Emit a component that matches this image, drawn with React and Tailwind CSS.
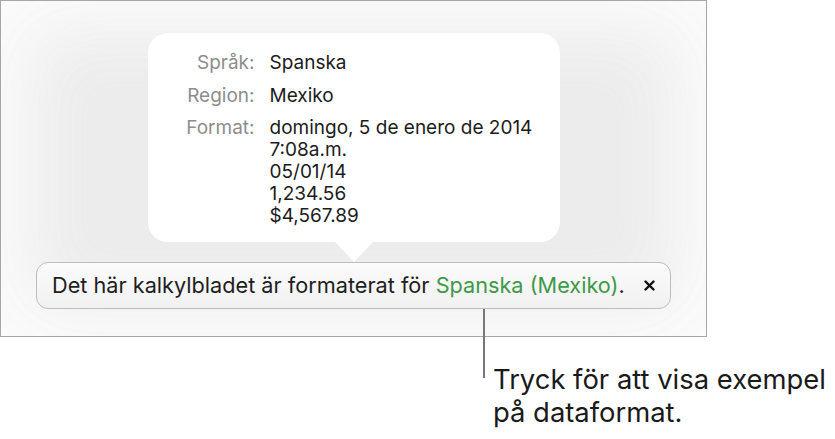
export default function App() {
  const font = { fontFamily: 'Inter, "Liberation Sans", sans-serif' };
  return (
    <div className="relative w-[835px] h-[439px] bg-white" style={font}>
      <div className="w-[707px] h-[337px] border border-[#a6a6a6] bg-[#ececec] shadow-[inset_0_0_70px_30px_rgba(252,252,252,0.95)] flex flex-col items-center pt-[32px]">
        <div className="relative w-[412px] bg-white rounded-[20px] pt-[19px] pb-[15px] pl-[15px]">
          <div className="grid grid-cols-[92px_1fr] gap-x-[15px] gap-y-[10.5px] text-[19px] leading-[22px]">
            <div className="text-right text-[#8d8d8d]">Språk:</div>
            <div className="text-[#1c1c1c]">Spanska</div>
            <div className="text-right text-[#8d8d8d]">Region:</div>
            <div className="text-[#1c1c1c]">Mexiko</div>
            <div className="text-right text-[#8d8d8d]">Format:</div>
            <div className="text-[#1c1c1c] flex flex-col">
              <span>domingo, 5 de enero de 2014</span>
              <span>7:08a.m.</span>
              <span>05/01/14</span>
              <span>1,234.56</span>
              <span>$4,567.89</span>
            </div>
          </div>
          <div className="absolute left-1/2 -translate-x-1/2 top-full w-0 h-0 border-l-[19px] border-r-[19px] border-t-[20px] border-l-transparent border-r-transparent border-t-white" />
        </div>
        <div className="mt-[20px] w-[635px] h-[47px] rounded-[12px] border border-[#bdbdbd] bg-gradient-to-b from-[#fbfbfb] to-[#f1f1f1] flex items-center pl-[15px] text-[21.7px] text-[#1e1e1e]">
          <span>
            Det här kalkylbladet är formaterat för{" "}
            <span className="text-[#3d9a48]">Spanska (Mexiko)</span>.
          </span>
          <svg className="ml-[19px]" width="11" height="11" viewBox="0 0 11 11">
            <path d="M1.5 1.5 L9.5 9.5 M9.5 1.5 L1.5 9.5" stroke="#111" strokeWidth="2.4" strokeLinecap="round" />
          </svg>
        </div>
      </div>
      <div className="absolute left-[483px] top-[309px] w-[1.5px] h-[69px] bg-[#777]" />
      <div className="ml-[493px] mt-[26px] text-[27.4px] leading-[33px] text-[#1a1a1a]">
        <div>Tryck för att visa exempel</div>
        <div>på dataformat.</div>
      </div>
    </div>
  );
}
